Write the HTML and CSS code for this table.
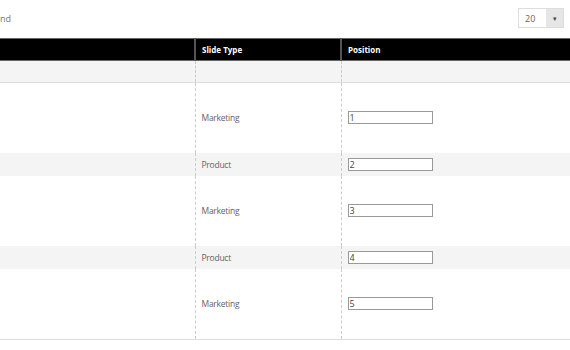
FILE: index.html
```html
<!DOCTYPE html>
<html lang="en">
<head>
    <meta charset="UTF-8">
    <title>Slides</title>
    <link rel="stylesheet" href="styles.css">
</head>
<body>
    <div class="toolbar">
        <span class="legend">nd</span>
        <div class="page-size">
            <span class="page-size-value">20</span>
            <span class="page-size-arrow">&#9662;</span>
        </div>
    </div>

    <table class="grid">
        <thead>
            <tr>
                <th class="col-name"></th>
                <th class="col-type">Slide Type</th>
                <th class="col-pos">Position</th>
            </tr>
        </thead>
        <tbody>
            <tr class="filter-row">
                <td></td>
                <td></td>
                <td></td>
            </tr>
            <tr class="tall">
                <td></td>
                <td>Marketing</td>
                <td><input type="text" class="pos-input" value="1"></td>
            </tr>
            <tr class="alt">
                <td></td>
                <td>Product</td>
                <td><input type="text" class="pos-input" value="2"></td>
            </tr>
            <tr class="tall">
                <td></td>
                <td>Marketing</td>
                <td><input type="text" class="pos-input" value="3"></td>
            </tr>
            <tr class="alt">
                <td></td>
                <td>Product</td>
                <td><input type="text" class="pos-input" value="4"></td>
            </tr>
            <tr class="tall last">
                <td></td>
                <td>Marketing</td>
                <td><input type="text" class="pos-input" value="5"></td>
            </tr>
        </tbody>
    </table>
</body>
</html>
```

FILE: styles.css
```css
* {
    box-sizing: border-box;
    margin: 0;
    padding: 0;
}

body {
    font-family: 'Open Sans', sans-serif;
    font-size: 8px;
    color: #666;
    background: white;
    overflow: hidden;
}

.toolbar {
    height: 38px;
    display: flex;
    align-items: center;
    justify-content: space-between;
    padding-right: 6px;
}

.legend {
    font-size: 9px;
    color: #777;
    margin-top: -2px;
}

.page-size {
    display: flex;
    width: 46px;
    height: 20px;
    border: 1px solid #ddd;
    margin-top: -2px;
}

.page-size-value {
    flex: 1;
    display: flex;
    align-items: center;
    padding-left: 6px;
    font-size: 9px;
    color: #666;
}

.page-size-arrow {
    width: 17px;
    background-color: #e6e6e6;
    display: flex;
    align-items: center;
    justify-content: center;
    font-size: 7px;
    color: #444;
}

.grid {
    width: 590px;
    border-collapse: collapse;
    table-layout: fixed;
}

.grid th {
    background-color: #000;
    color: white;
    font-weight: 700;
    text-align: left;
    height: 22px;
    padding: 0 6px 1px;
    border-top: 1px solid #666;
    border-bottom: 1px solid #666;
    border-right: 2px solid #555;
}

.col-name {
    width: 195px;
}

.col-type {
    width: 146px;
}

.grid td {
    padding: 0 6px;
    border-right: 1px dashed #ccc;
    vertical-align: middle;
    font-size: 8.5px;
    letter-spacing: -0.25px;
    color: #6a6068;
}

.grid td:last-child,
.grid th:last-child {
    border-right: none;
}

.filter-row td {
    height: 22px;
    background-color: #f4f4f4;
    border-bottom: 1px solid #ddd;
}

.tall td {
    height: 70px;
}

.alt td {
    height: 23px;
    background-color: #f4f4f4;
}

.last td {
    height: 71px;
    border-bottom: 1px solid #ddd;
}

.pos-input {
    width: 85px;
    height: 13px;
    border: 1px solid #999;
    font-family: 'Open Sans', sans-serif;
    font-size: 9px;
    color: #444;
    padding: 0 1px;
    background: white;
    display: block;
}
```
